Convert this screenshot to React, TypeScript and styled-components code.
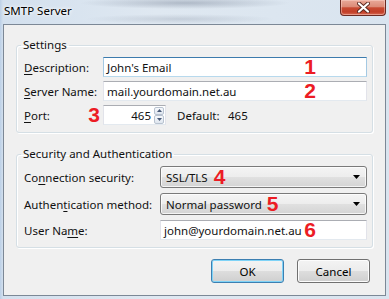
import { FC, ReactNode } from 'react';
import styled, { createGlobalStyle, css } from 'styled-components';

const uiFont = `'Noto Sans', 'Open Sans', 'DejaVu Sans', sans-serif`;
const markerFont = `'Liberation Sans', Arial, sans-serif`;

const GlobalStyle = createGlobalStyle`
	html, body {
		margin: 0;
		padding: 0;
		background: #d6e2ee;
	}
	body {
		font-family: ${uiFont};
		font-size: 11.5px;
		color: #111;
		overflow: hidden;
	}
	* {
		box-sizing: border-box;
	}
`;

const Window = styled('div')`
	width: 389px;
	height: 299px;
	display: flex;
	flex-direction: column;
	background: linear-gradient(90deg, #bcd0e7 0px, #d3e0ee 3px, #dfe8f1 40%, #d9e4ef 100%);
`;

const TitleBar = styled('div')`
	height: 24px;
	flex-shrink: 0;
	display: flex;
	align-items: flex-start;
	padding-left: 4px;
	background:
		radial-gradient(ellipse 105px 6px at 185px 3px, rgba(80, 92, 115, 0.33), transparent),
		radial-gradient(ellipse 95px 5px at 180px 19px, rgba(80, 92, 115, 0.18), transparent);
`;

const Title = styled('span')`
	line-height: 22px;
	color: #000;
	text-shadow: 0 0 5px #fff, 0 0 3px #fff;
`;

const CloseButton = styled('div')`
	margin-left: auto;
	margin-right: 3px;
	width: 46px;
	height: 16px;
	display: flex;
	align-items: center;
	justify-content: center;
	border: 1px solid #6b2a22;
	border-top: none;
	border-radius: 0 0 4px 4px;
	background: linear-gradient(#e9a999 0%, #dc8b78 45%, #c84a32 52%, #c23f28 80%, #d96c55 100%);
	box-shadow: inset 0 0 0 1px rgba(255, 220, 210, 0.45);
`;

const Client = styled('div')`
	flex: 1;
	margin: 0 3px 3px;
	display: flex;
	flex-direction: column;
	padding: 12px 12px 0;
	background: #f0f0f0;
	border: 1px solid #7c8896;
`;

const Group = styled('fieldset')`
	margin: 0;
	min-width: 0;
	padding: 4px 5px 7px 7px;
	border: 1px solid #d5dfe5;
	border-radius: 3px;
	box-shadow: inset 1px 1px 0 #fff, 1px 1px 0 #fff;
	& + & {
		margin-top: 13px;
	}
`;

const Legend = styled('legend')`
	margin-left: -3px;
	padding: 0 2px;
	line-height: 16px;
`;

const Rows = styled('div')<{ $labelWidth: number }>`
	display: grid;
	grid-template-columns: ${(p) => p.$labelWidth}px 1fr;
	row-gap: 4px;
	align-items: center;
`;

const LooseRows = styled(Rows)`
	row-gap: 5px;
`;

const Label = styled('div')`
	display: flex;
	align-items: center;
	white-space: nowrap;
`;

const Key = styled('span')`
	text-decoration: underline;
	text-underline-offset: 2px;
`;

const Field = styled('div')<{ $focused?: boolean }>`
	height: 20px;
	display: flex;
	align-items: center;
	padding: 0 3px;
	white-space: nowrap;
	background: #fff;
	border: 1px solid;
	border-color: #abadb3 #e2e3ea #e3e9ef #e2e3ea;
	${(p) =>
		p.$focused &&
		css`
			border-color: #3d7bad #a4c9e3 #b7d9ed #a4c9e3;
		`}
`;

const PortRow = styled('div')`
	display: flex;
	align-items: center;
`;

const PortBox = styled(Field)`
	width: 63px;
	padding: 0 1px 0 3px;
`;

const PortValue = styled('span')`
	flex: 1;
	text-align: right;
	padding-right: 3px;
`;

const Spin = styled('div')`
	width: 10px;
	height: 17px;
	display: flex;
	flex-direction: column;
`;

const SpinButton = styled('div')`
	flex: 1;
	display: flex;
	align-items: center;
	justify-content: center;
	border: 1px solid #b9c3d0;
	border-radius: 2px;
	background: linear-gradient(#f7f9fc, #dfe6ef);
`;

const DefaultText = styled('span')`
	margin-left: 11px;
	width: 51px;
`;

const Combo = styled('div')`
	height: 22px;
	display: flex;
	align-items: center;
	padding: 0 6px 0 5px;
	white-space: nowrap;
	border: 1px solid #7a7a7a;
	border-radius: 3px;
	background: linear-gradient(#f4f4f4 0%, #ededed 50%, #e0e0e0 52%, #d4d4d4 100%);
	box-shadow: inset 0 0 0 1px rgba(255, 255, 255, 0.75);
`;

const ComboArrow = styled('svg')`
	margin-left: auto;
	flex-shrink: 0;
`;

const Marker = styled('span')<{ $gap?: number; $right?: number }>`
	font-family: ${markerFont};
	font-weight: 700;
	font-size: 21px;
	line-height: 16px;
	color: #ec1c24;
	${(p) =>
		p.$right !== undefined
			? css`
					margin-left: auto;
					margin-right: ${p.$right}px;
				`
			: css`
					margin-left: ${p.$gap ?? 0}px;
				`}
`;

const Buttons = styled('div')`
	display: flex;
	justify-content: flex-end;
	gap: 13px;
	margin-top: 11px;
	padding-right: 3px;
`;

const Button = styled('button')<{ $default?: boolean }>`
	width: 73px;
	height: 24px;
	padding: 0;
	font: inherit;
	color: #000;
	border: 1px solid #707070;
	border-radius: 3px;
	background: linear-gradient(#f3f3f3 0%, #ececec 50%, #dddddd 52%, #cfcfcf 100%);
	box-shadow: inset 0 0 0 1px #fcfcfc;
	${(p) =>
		p.$default &&
		css`
			border-color: #3c7fb1;
			box-shadow: inset 0 0 0 1px #7fd3f7;
		`}
`;

const SpinArrow: FC<{ up?: boolean }> = ({ up }) => (
	<svg width="5" height="3" viewBox="0 0 5 3">
		<polygon points={up ? '0,3 5,3 2.5,0' : '0,0 5,0 2.5,3'} fill="#4a5b78" />
	</svg>
);

const Select: FC<{ children: ReactNode }> = ({ children }) => (
	<Combo>
		{children}
		<ComboArrow width="7" height="4" viewBox="0 0 7 4">
			<polygon points="0,0 7,0 3.5,4" fill="#000" />
		</ComboArrow>
	</Combo>
);

const App: FC = () => {
	return (
		<Window>
			<GlobalStyle />
			<TitleBar>
				<Title>SMTP Server</Title>
				<CloseButton>
					<svg width="13" height="11" viewBox="0 0 13 11">
						<path d="M2 1.5 L11 9.5 M11 1.5 L2 9.5" stroke="#5b2820" strokeWidth="4" strokeLinecap="round" />
						<path d="M2 1.5 L11 9.5 M11 1.5 L2 9.5" stroke="#fff" strokeWidth="2.2" strokeLinecap="round" />
					</svg>
				</CloseButton>
			</TitleBar>

			<Client>
				<Group>
					<Legend>Settings</Legend>
					<Rows $labelWidth={79}>
						<Label>
							<Key>D</Key>escription:
						</Label>
						<Field $focused>
							John's Email
							<Marker $right={47}>1</Marker>
						</Field>

						<Label>
							<Key>S</Key>erver Name:
						</Label>
						<Field>
							mail.yourdomain.net.au
							<Marker $right={47}>2</Marker>
						</Field>

						<Label>
							<Key>P</Key>ort:
							<Marker $right={3}>3</Marker>
						</Label>
						<PortRow>
							<PortBox>
								<PortValue>465</PortValue>
								<Spin>
									<SpinButton>
										<SpinArrow up />
									</SpinButton>
									<SpinButton>
										<SpinArrow />
									</SpinButton>
								</Spin>
							</PortBox>
							<DefaultText>Default:</DefaultText>
							<span>465</span>
						</PortRow>
					</Rows>
				</Group>

				<Group>
					<Legend>Security and Authentication</Legend>
					<LooseRows $labelWidth={136}>
						<Label>
							Co<Key>n</Key>nection security:
						</Label>
						<Select>
							SSL/TLS
							<Marker $gap={6}>4</Marker>
						</Select>

						<Label>
							Authen<Key>t</Key>ication method:
						</Label>
						<Select>
							Normal password
							<Marker $gap={5}>5</Marker>
						</Select>

						<Label>
							User Na<Key>m</Key>e:
						</Label>
						<Field>
							john@yourdomain.net.au
							<Marker $right={47}>6</Marker>
						</Field>
					</LooseRows>
				</Group>

				<Buttons>
					<Button $default>OK</Button>
					<Button>Cancel</Button>
				</Buttons>
			</Client>
		</Window>
	);
};

export default App;
